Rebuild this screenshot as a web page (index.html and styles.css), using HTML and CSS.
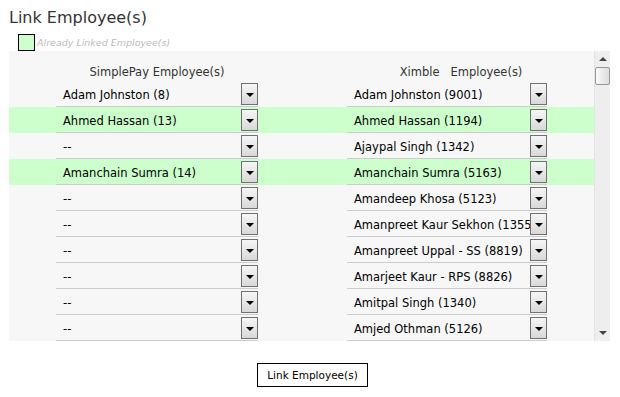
FILE: index.html
```html
<!DOCTYPE html>
<html lang="en">
<head>
  <meta charset="UTF-8" />
  <title>Link Employee(s)</title>
  <link rel="stylesheet" href="styles.css">
</head>
<body>

  <h2 class="title">Link Employee(s)</h2>
  <div class="legend"><span class="legend-box"></span><span>Already Linked Employee(s)</span></div>

  <div class="panel">
    <div class="list">
      <div class="row head">
        <div class="col-head">SimplePay Employee(s)</div>
        <div class="col-head right">Ximble&nbsp;&nbsp; Employee(s)</div>
      </div>
      <div id="rows"></div>
    </div>
    <div class="scrollbar">
      <span class="arrow up"></span>
      <span class="thumb"></span>
      <span class="track"></span>
      <span class="arrow down"></span>
    </div>
  </div>

  <div class="actions">
    <button class="link-btn">Link Employee(s)</button>
  </div>

  <script>
    const pares = [
      ['Adam Johnston (8)', 'Adam Johnston (9001)', false],
      ['Ahmed Hassan (13)', 'Ahmed Hassan (1194)', true],
      ['--', 'Ajaypal Singh (1342)', false],
      ['Amanchain Sumra (14)', 'Amanchain Sumra (5163)', true],
      ['--', 'Amandeep Khosa (5123)', false],
      ['--', 'Amanpreet Kaur Sekhon (1355)', false],
      ['--', 'Amanpreet Uppal - SS (8819)', false],
      ['--', 'Amarjeet Kaur - RPS (8826)', false],
      ['--', 'Amitpal Singh (1340)', false],
      ['--', 'Amjed Othman (5126)', false]
    ];

    function caixa(texto, classe) {
      return `<div class="dropdown ${classe}"><span class="value">${texto}</span><span class="btn"></span></div>`;
    }

    document.getElementById('rows').innerHTML = pares.map(p =>
      `<div class="row${p[2] ? ' linked' : ''}">${caixa(p[0], 'left')}${caixa(p[1], 'right')}</div>`
    ).join('');
  </script>

</body>
</html>
```

FILE: styles.css
```css
* { box-sizing: border-box; }
body { margin: 0; padding: 0 9px; font-family: "DejaVu Sans", Verdana, sans-serif; color: #000; background: #fff; }
.title { margin: 0; padding-top: 7px; font-size: 16px; line-height: 22px; font-weight: normal; color: #333; }
.legend { display: flex; align-items: center; gap: 2px; height: 18px; margin: 4px 0 0 9px; font-size: 9.5px; font-style: italic; color: #bbb; }
.legend-box { width: 17px; height: 17px; border: 1px solid #000; background: #ccffcc; }
.panel { display: flex; width: 601px; height: 290px; background: #f7f7f7; }
.list { flex: 1; overflow: hidden; }
.row { display: flex; gap: 89px; padding-left: 47px; height: 26px; }
.row.linked { background: #ccffcc; }
.row.head { height: 30px; }
.col-head { width: 202px; padding-top: 14px; text-align: center; font-size: 11.5px; line-height: 14px; color: #333; }
.col-head.right { width: 200px; padding-left: 28px; }
.dropdown { display: flex; width: 202px; height: 26px; border-bottom: 1px solid #ccc; font-size: 11.5px; }
.dropdown.right { width: 200px; }
.value { flex: 1; padding: 7px 0 0 7px; white-space: nowrap; overflow: hidden; line-height: 14px; }
.btn { position: relative; width: 17px; height: 22px; margin-top: 2px; border: 1px solid #707070; background: linear-gradient(#f6f6f6, #d8d8d8); }
.btn::after { content: ""; position: absolute; left: 4px; top: 9px; border-left: 4px solid transparent; border-right: 4px solid transparent; border-top: 4px solid #000; }
.scrollbar { display: flex; flex-direction: column; align-items: center; width: 16px; background: #eee; border-left: 1px solid #e4e4e4; }
.arrow { width: 0; height: 0; margin: 6px 0; border-left: 4px solid transparent; border-right: 4px solid transparent; }
.arrow.up { border-bottom: 4px solid #444; }
.arrow.down { border-top: 4px solid #444; }
.thumb { width: 15px; height: 18px; border: 1px solid #999; border-radius: 2px; background: linear-gradient(90deg, #fafafa, #dcdcdc); }
.track { flex: 1; }
.actions { display: flex; justify-content: center; padding-top: 22px; margin-left: 5px; }
.link-btn { width: 111px; height: 24px; padding: 0; border: 1px solid #000; background: #fff; font-family: inherit; font-size: 10.5px; color: #000; cursor: pointer; }
```
